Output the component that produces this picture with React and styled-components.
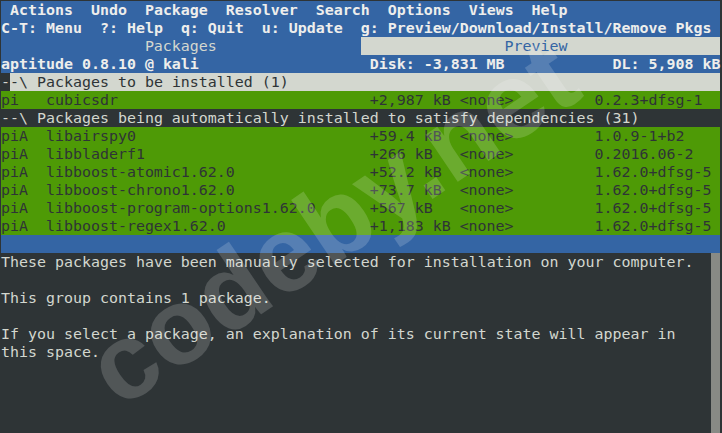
import React from 'react'
import styled, { createGlobalStyle } from 'styled-components'

const GlobalStyle = createGlobalStyle`
  html, body {
    margin: 0;
    padding: 0;
    background: #2e3436;
  }
`

const c = {
  blue: '#3465a4',
  green: '#4e9a06',
  light: '#d3d7cf',
  dark: '#2e3436',
  white: '#eeeeec',
  scroll: '#888a85',
}

const Screen = styled.div`
  position: relative;
  width: 722px;
  height: 433px;
  box-sizing: border-box;
  padding: 1px 0 0 1px;
  background: ${c.dark};
  overflow: hidden;
  font-family: "DejaVu Sans Mono", "Liberation Mono", monospace;
  font-size: 14.95px;
  line-height: 18px;
  white-space: pre;
`

const Row = styled.div`
  height: 18px;
  width: 80ch;
  background: ${p => p.$bg};
  color: ${p => p.$fg};
  font-weight: ${p => (p.$bold ? 700 : 400)};
`

const MenuBar = styled(Row)`
  display: flex;
  gap: 2ch;
  padding-left: 1ch;
  box-sizing: border-box;
`

const KeyBar = styled(Row)`
  display: flex;
  gap: 2ch;
`

const Tabs = styled(Row)`
  display: grid;
  grid-template-columns: 40ch 40ch;
`

const Tab = styled.div`
  padding-left: 16ch;
  background: ${p => (p.$active ? c.light : c.blue)};
  color: ${p => (p.$active ? c.blue : c.light)};
`

const StatusBar = styled(Row)`
  display: grid;
  grid-template-columns: 41ch 27ch 12ch;
`

const Cursor = styled.span`
  background: ${c.dark};
  color: ${c.light};
`

const PackageRow = styled(Row)`
  display: grid;
  grid-template-columns: 5ch 36ch 10ch 15ch 14ch;
`

const Description = styled.div`
  display: grid;
  grid-template-columns: 79ch 1ch;
  height: 180px;
  width: 80ch;
  color: ${c.light};
`

const DescText = styled.div`
  white-space: normal;
`

const Para = styled.p`
  margin: 0 0 18px;
`

const Scrollbar = styled.div`
  background: ${c.scroll};
`

const Watermark = styled.div`
  position: absolute;
  left: 332px;
  top: 222px;
  transform: translate(-50%, -50%) rotate(-34deg);
  font-family: "Liberation Sans", Arial, sans-serif;
  font-weight: 700;
  font-size: 108px;
  line-height: 1;
  color: rgba(255, 255, 255, 0.17);
  pointer-events: none;
`

const menus = ['Actions', 'Undo', 'Package', 'Resolver', 'Search', 'Options', 'Views', 'Help']
const keys = ['C-T: Menu', '?: Help', 'q: Quit', 'u: Update', 'g: Preview/Download/Install/Remove Pkgs']

const autoPkgs = [
  ['libairspy0', '+59.4 kB', '1.0.9-1+b2'],
  ['libbladerf1', '+266 kB', '0.2016.06-2'],
  ['libboost-atomic1.62.0', '+52.2 kB', '1.62.0+dfsg-5'],
  ['libboost-chrono1.62.0', '+73.7 kB', '1.62.0+dfsg-5'],
  ['libboost-program-options1.62.0', '+567 kB', '1.62.0+dfsg-5'],
  ['libboost-regex1.62.0', '+1,183 kB', '1.62.0+dfsg-5'],
]

function Pkg({ flags, name, size, version }) {
  return (
    <PackageRow $bg={c.green} $fg={c.dark}>
      <span>{flags}</span>
      <span>{name}</span>
      <span>{size}</span>
      <span>{'<none>'}</span>
      <span>{version}</span>
    </PackageRow>
  )
}

export default function App() {
  return (
    <Screen>
      <GlobalStyle />
      <MenuBar $bg={c.blue} $fg={c.white} $bold>
        {menus.map(m => <span key={m}>{m}</span>)}
      </MenuBar>
      <KeyBar $bg={c.blue} $fg={c.white} $bold>
        {keys.map(k => <span key={k}>{k}</span>)}
      </KeyBar>
      <Tabs>
        <Tab>Packages</Tab>
        <Tab $active>Preview</Tab>
      </Tabs>
      <StatusBar $bg={c.blue} $fg={c.white} $bold>
        <span>aptitude 0.8.10 @ kali</span>
        <span>Disk: -3,831 MB</span>
        <span>DL: 5,908 kB</span>
      </StatusBar>
      <Row $bg={c.light} $fg={c.dark}>
        <Cursor>-</Cursor>{'-\\ Packages to be installed (1)'}
      </Row>
      <Pkg flags="pi" name="cubicsdr" size="+2,987 kB" version="0.2.3+dfsg-1" />
      <Row $bg={c.dark} $fg={c.light}>
        {'--\\ Packages being automatically installed to satisfy dependencies (31)'}
      </Row>
      {autoPkgs.map(([name, size, version]) => (
        <Pkg key={name} flags="piA" name={name} size={size} version={version} />
      ))}
      <Row $bg={c.blue} />
      <Description>
        <DescText>
          <Para>These packages have been manually selected for installation on your computer.</Para>
          <Para>This group contains 1 package.</Para>
          <Para>If you select a package, an explanation of its current state will appear in this space.</Para>
        </DescText>
        <Scrollbar />
      </Description>
      <Watermark>codeby.net</Watermark>
    </Screen>
  )
}
